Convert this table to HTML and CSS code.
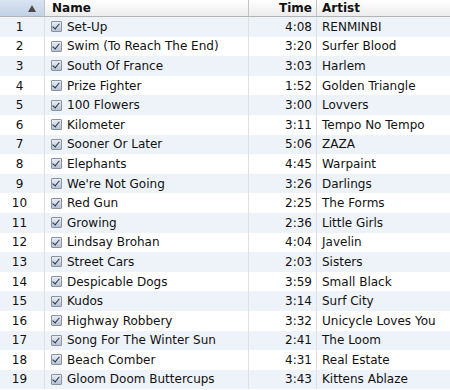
FILE: index.html
```html
<!DOCTYPE html>
<html>
<head>
<meta charset="utf-8">
<link rel="stylesheet" href="styles.css">
</head>
<body>
<div class="table">
  <div class="row head">
    <div class="cell idx sorted"><span class="arrow"></span></div>
    <div class="cell name">Name</div>
    <div class="cell time">Time</div>
    <div class="cell artist">Artist</div>
  </div>
  <div class="row"><div class="cell idx">1</div><div class="cell name"><span class="cb"></span>Set-Up</div><div class="cell time">4:08</div><div class="cell artist">RENMINBI</div></div>
  <div class="row"><div class="cell idx">2</div><div class="cell name"><span class="cb"></span>Swim (To Reach The End)</div><div class="cell time">3:20</div><div class="cell artist">Surfer Blood</div></div>
  <div class="row"><div class="cell idx">3</div><div class="cell name"><span class="cb"></span>South Of France</div><div class="cell time">3:03</div><div class="cell artist">Harlem</div></div>
  <div class="row"><div class="cell idx">4</div><div class="cell name"><span class="cb"></span>Prize Fighter</div><div class="cell time">1:52</div><div class="cell artist">Golden Triangle</div></div>
  <div class="row"><div class="cell idx">5</div><div class="cell name"><span class="cb"></span>100 Flowers</div><div class="cell time">3:00</div><div class="cell artist">Lovvers</div></div>
  <div class="row"><div class="cell idx">6</div><div class="cell name"><span class="cb"></span>Kilometer</div><div class="cell time">3:11</div><div class="cell artist">Tempo No Tempo</div></div>
  <div class="row"><div class="cell idx">7</div><div class="cell name"><span class="cb"></span>Sooner Or Later</div><div class="cell time">5:06</div><div class="cell artist">ZAZA</div></div>
  <div class="row"><div class="cell idx">8</div><div class="cell name"><span class="cb"></span>Elephants</div><div class="cell time">4:45</div><div class="cell artist">Warpaint</div></div>
  <div class="row"><div class="cell idx">9</div><div class="cell name"><span class="cb"></span>We're Not Going</div><div class="cell time">3:26</div><div class="cell artist">Darlings</div></div>
  <div class="row"><div class="cell idx">10</div><div class="cell name"><span class="cb"></span>Red Gun</div><div class="cell time">2:25</div><div class="cell artist">The Forms</div></div>
  <div class="row"><div class="cell idx">11</div><div class="cell name"><span class="cb"></span>Growing</div><div class="cell time">2:36</div><div class="cell artist">Little Girls</div></div>
  <div class="row"><div class="cell idx">12</div><div class="cell name"><span class="cb"></span>Lindsay Brohan</div><div class="cell time">4:04</div><div class="cell artist">Javelin</div></div>
  <div class="row"><div class="cell idx">13</div><div class="cell name"><span class="cb"></span>Street Cars</div><div class="cell time">2:03</div><div class="cell artist">Sisters</div></div>
  <div class="row"><div class="cell idx">14</div><div class="cell name"><span class="cb"></span>Despicable Dogs</div><div class="cell time">3:59</div><div class="cell artist">Small Black</div></div>
  <div class="row"><div class="cell idx">15</div><div class="cell name"><span class="cb"></span>Kudos</div><div class="cell time">3:14</div><div class="cell artist">Surf City</div></div>
  <div class="row"><div class="cell idx">16</div><div class="cell name"><span class="cb"></span>Highway Robbery</div><div class="cell time">3:32</div><div class="cell artist">Unicycle Loves You</div></div>
  <div class="row"><div class="cell idx">17</div><div class="cell name"><span class="cb"></span>Song For The Winter Sun</div><div class="cell time">2:41</div><div class="cell artist">The Loom</div></div>
  <div class="row"><div class="cell idx">18</div><div class="cell name"><span class="cb"></span>Beach Comber</div><div class="cell time">4:31</div><div class="cell artist">Real Estate</div></div>
  <div class="row"><div class="cell idx">19</div><div class="cell name"><span class="cb"></span>Gloom Doom Buttercups</div><div class="cell time">3:43</div><div class="cell artist">Kittens Ablaze</div></div>
</div>
</body>
</html>
```
FILE: styles.css
```css
html, body {
  margin: 0;
  padding: 0;
  background: #fff;
}
.table {
  width: 450px;
  font-family: "DejaVu Sans", "Liberation Sans", sans-serif;
  font-size: 12px;
  color: #111;
}
.row {
  display: grid;
  grid-template-columns: 45px 204px 68px 1fr;
  height: 19.6px;
  align-items: stretch;
}
.row:nth-child(even) {
  background: #eef3f9;
}
.row.head {
  height: 17px;
  background: linear-gradient(#ffffff, #ececec);
  border-bottom: 1px solid #b3b3b3;
  box-sizing: border-box;
  font-weight: bold;
}
.cell {
  display: flex;
  align-items: center;
  box-sizing: border-box;
  border-right: 1px solid #e0e0e0;
  white-space: nowrap;
  overflow: hidden;
}
.head .cell {
  border-right: 1px solid #c4c4c4;
}
.cell.artist {
  border-right: none;
  padding-left: 5px;
}
.cell.idx {
  justify-content: center;
  padding-right: 5px;
}
.head .cell.idx {
  justify-content: flex-end;
  padding-right: 8px;
}
.sorted {
  background: linear-gradient(#dae4f2, #c2d1e6);
}
.arrow {
  width: 0;
  height: 0;
  border-left: 4px solid transparent;
  border-right: 4px solid transparent;
  border-bottom: 7px solid #4a4a4a;
}
.cell.name {
  padding-left: 6px;
}
.head .cell.name {
  padding-left: 7px;
}
.cell.time {
  justify-content: flex-end;
  padding-right: 4px;
}
.cb {
  position: relative;
  width: 9px;
  height: 9px;
  border: 1px solid #8a93a0;
  border-radius: 1px;
  background: linear-gradient(#e8edf5, #b5c2d4);
  margin-right: 5px;
  flex: none;
}
.cb::after {
  content: "";
  position: absolute;
  left: 2px;
  top: 0px;
  width: 3px;
  height: 6px;
  border-right: 1.6px solid #2b3340;
  border-bottom: 1.6px solid #2b3340;
  transform: rotate(40deg);
}
```
